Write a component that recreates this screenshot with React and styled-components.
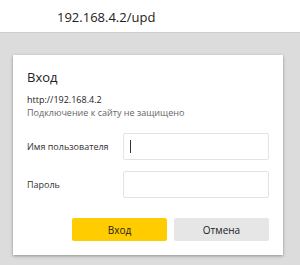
import React from 'react';
import styled, { createGlobalStyle } from 'styled-components';

const Global = createGlobalStyle`
  html, body { margin: 0; padding: 0; }
  body {
    width: 300px;
    height: 265px;
    overflow: hidden;
    font-family: "Open Sans", "Noto Sans", sans-serif;
    background: #dcdcdc;
  }
`;

const Page = styled.div`
  display: flex;
  flex-direction: column;
  height: 265px;
`;

const AddressBar = styled.div`
  height: 33px;
  background: #fff;
  border-bottom: 1px solid #cfcfcf;
  box-sizing: border-box;
  padding: 8px 0 0 57px;
  font-size: 13px;
  color: #222;
`;

const Backdrop = styled.div`
  flex: 1;
  background: #dcdcdc;
  padding: 22px 17px 0 13px;
`;

const Dialog = styled.div`
  height: 200px;
  background: #fff;
  box-sizing: border-box;
  padding: 13px 14px 0 14px;
  box-shadow: 0 1px 3px rgba(0, 0, 0, 0.35);
`;

const Title = styled.div`
  font-size: 13px;
  color: #222;
  line-height: 18px;
`;

const Url = styled.div`
  margin-top: 7px;
  font-size: 9px;
  color: #222;
  line-height: 13px;
`;

const Note = styled.div`
  font-size: 9px;
  color: #666;
  line-height: 13px;
`;

const Form = styled.div`
  margin-top: 14px;
  display: grid;
  grid-template-columns: 96px 146px;
  row-gap: 11px;
  align-items: center;
`;

const Label = styled.div`
  font-size: 9px;
  color: #333;
`;

const Input = styled.div`
  height: 27px;
  box-sizing: border-box;
  border: 1px solid #e3e3e3;
  border-radius: 2px;
  display: flex;
  align-items: center;
  padding-left: 6px;
`;

const Caret = styled.span`
  width: 1px;
  height: 13px;
  background: #333;
`;

const Buttons = styled.div`
  margin-top: 20px;
  display: flex;
  justify-content: flex-end;
  gap: 7px;
`;

const Button = styled.div`
  width: 95px;
  height: 23px;
  display: flex;
  align-items: center;
  justify-content: center;
  border-radius: 2px;
  font-size: 10px;
  color: #222;
  background: ${props => (props.primary ? '#ffcc00' : '#e6e6e6')};
`;

const App = () => (
  <Page>
    <Global />
    <AddressBar>192.168.4.2/upd</AddressBar>
    <Backdrop>
      <Dialog>
        <Title>Вход</Title>
        <Url>http://192.168.4.2</Url>
        <Note>Подключение к сайту не защищено</Note>
        <Form>
          <Label>Имя пользователя</Label>
          <Input><Caret /></Input>
          <Label>Пароль</Label>
          <Input />
        </Form>
        <Buttons>
          <Button primary>Вход</Button>
          <Button>Отмена</Button>
        </Buttons>
      </Dialog>
    </Backdrop>
  </Page>
);

export default App;
